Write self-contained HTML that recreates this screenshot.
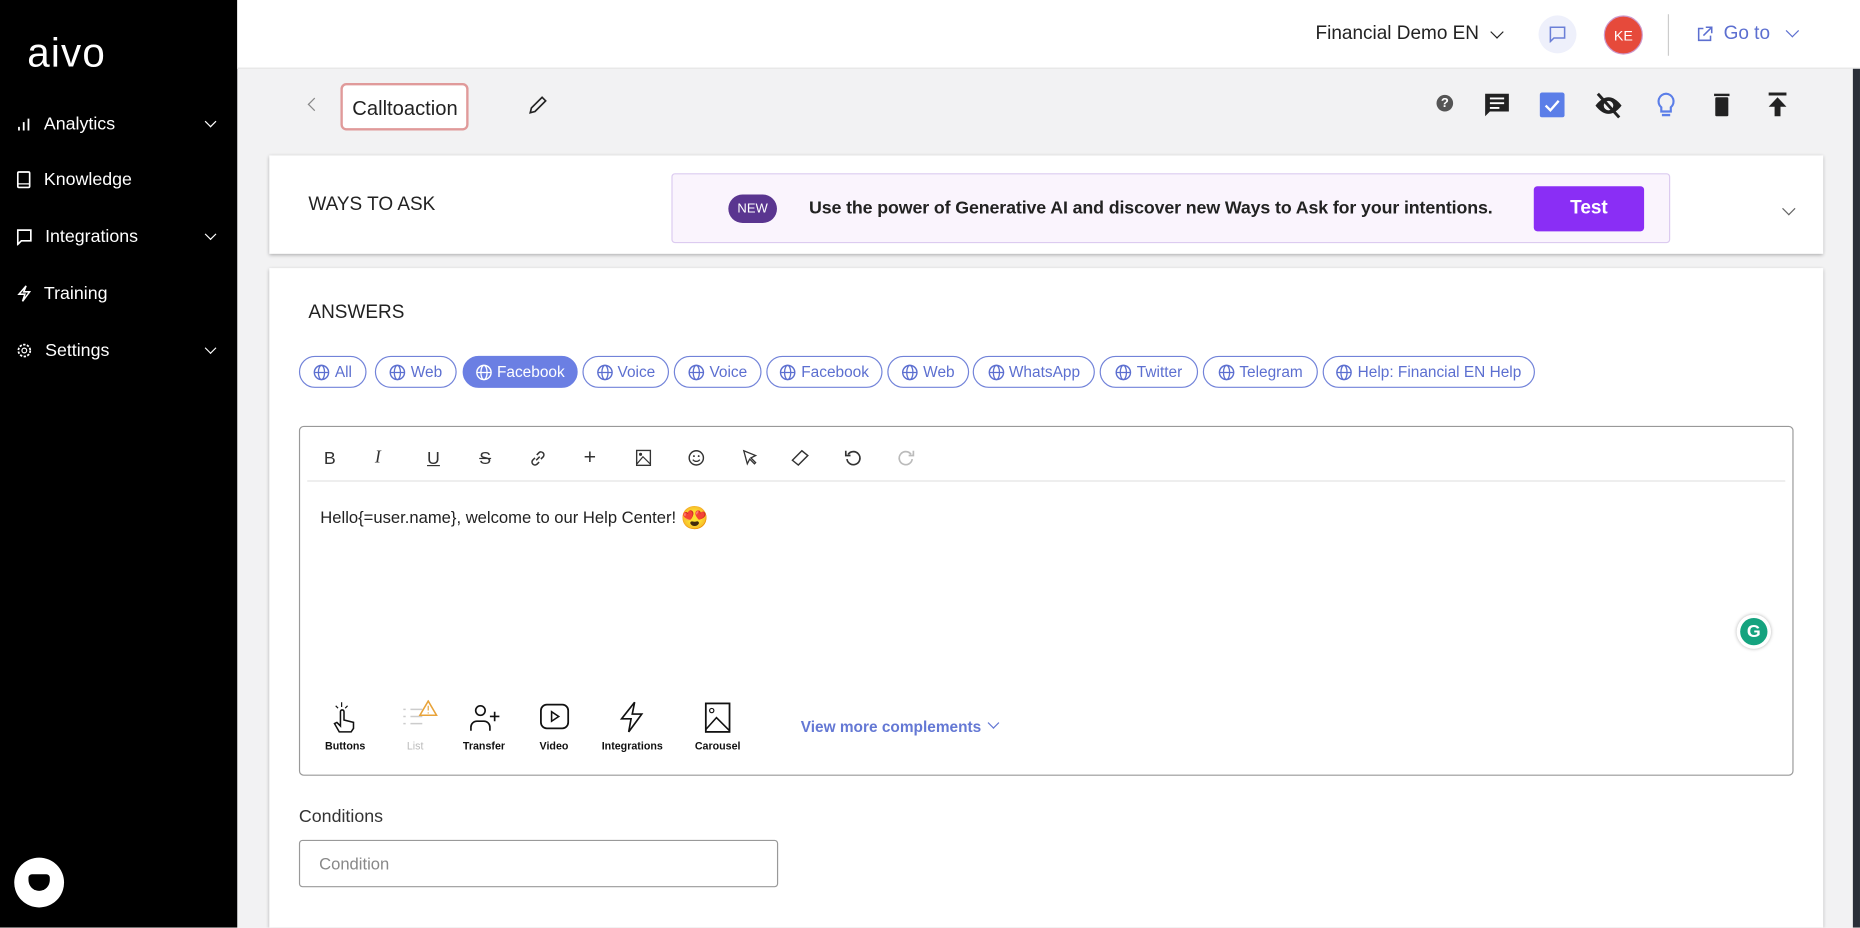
<!DOCTYPE html>
<html><head><meta charset="utf-8"><style>
*{box-sizing:border-box;margin:0;padding:0}
html,body{width:1860px;height:928px;overflow:hidden}
body{font-family:"Liberation Sans",sans-serif;background:#f2f2f3}
#w{width:1568px;height:782px;transform:scale(1.18622);transform-origin:0 0;position:absolute;left:0;top:0;background:#f2f2f3;overflow:hidden}
.a{position:absolute}
.sb{left:0;top:0;width:200px;height:782px;background:#000;color:#fff}
.mi{position:absolute;left:14px;font-size:15px;color:#fff;display:flex;align-items:center;gap:11px}
.chev{position:absolute;left:174px;width:7px;height:7px;border-right:1.5px solid #fff;border-bottom:1.5px solid #fff;transform:rotate(45deg)}
.top{left:200px;top:0;width:1368px;height:58px;background:#fff;border-bottom:1px solid #e4e4e4}
.card{background:#fff;box-shadow:0 1px 3px rgba(0,0,0,.3)}
.chip{position:absolute;top:300px;height:27px;border:1px solid #7283d9;border-radius:14px;color:#5c6fd0;font-size:13px;display:flex;align-items:center;justify-content:center;gap:4px}
.chip.on{background:#6b7fe3;color:#fff;border-color:#6b7fe3}
.tb{position:absolute;top:378px;font-size:15px;color:#333}
.cl{position:absolute;top:624px;font-size:9px;font-weight:bold;color:#111;transform:translateX(-50%)}
</style></head><body><div id="w">
<div class="a sb">
<div class="a" style="left:23px;top:26px;font-size:34px;letter-spacing:1px;font-weight:300">aivo</div>
<div class="mi" style="top:96px"><svg width="12" height="12"><path d="M2 11V8M6 11V4M10 11V1" stroke="#fff" stroke-width="1.5"/></svg>Analytics</div><div class="chev" style="top:99px"></div>
<div class="mi" style="top:143px"><svg width="12" height="15"><rect x="1" y="1" width="10" height="13" rx="1" fill="none" stroke="#fff" stroke-width="1.4"/><line x1="1" y1="11" x2="11" y2="11" stroke="#fff"/></svg>Knowledge</div>
<div class="mi" style="top:191px"><svg width="13" height="14"><path d="M1 1h11v9H4l-3 3z" fill="none" stroke="#fff" stroke-width="1.4"/></svg>Integrations</div><div class="chev" style="top:194px"></div>
<div class="mi" style="top:239px"><svg width="12" height="15"><path d="M8 1L2 8h5l-2 6 6-8H6z" fill="none" stroke="#fff" stroke-width="1.3"/></svg>Training</div>
<div class="mi" style="top:287px"><svg width="13" height="13"><circle cx="6.5" cy="6.5" r="5" fill="none" stroke="#fff" stroke-width="1.5" stroke-dasharray="2 1.2"/><circle cx="6.5" cy="6.5" r="2" fill="none" stroke="#fff"/></svg>Settings</div><div class="chev" style="top:290px"></div>
<div class="a" style="left:12px;top:723px;width:42px;height:42px;border-radius:50%;background:#fff"><div class="a" style="left:12px;top:14px;width:18px;height:14px;background:#000;border-radius:3px 3px 9px 9px"></div></div>
</div>
<div class="a top">
<div class="a" style="left:909px;top:20px;font-size:16px;color:#222">Financial Demo EN</div>
<div class="a" style="left:1058px;top:23px;width:8px;height:8px;border-right:1.5px solid #222;border-bottom:1.5px solid #222;transform:rotate(45deg)"></div>
<div class="a" style="left:1097px;top:13px;width:32px;height:32px;border-radius:50%;background:#eef0fb"><svg class="a" style="left:9px;top:9px" width="14" height="14"><path d="M1 1h12v9H4l-3 3z" fill="none" stroke="#6b7fd7" stroke-width="1.3"/></svg></div>
<div class="a" style="left:1152px;top:13px;width:33px;height:33px;border-radius:50%;background:#e64a3b;border:1.5px solid #c9c;color:#fff;font-size:12px;display:flex;align-items:center;justify-content:center">KE</div>
<div class="a" style="left:1206px;top:12px;width:1px;height:35px;background:#ccc"></div>
<svg class="a" style="left:1230px;top:22px" width="14" height="14"><path d="M6 2H2v10h10V8M8 1h5v5M13 1L6 8" fill="none" stroke="#5c6fd0" stroke-width="1.3"/></svg>
<div class="a" style="left:1253px;top:20px;font-size:16px;color:#5c6fd0">Go to</div>
<div class="a" style="left:1307px;top:22px;width:8px;height:8px;border-right:1.5px solid #5c6fd0;border-bottom:1.5px solid #5c6fd0;transform:rotate(45deg)"></div>
</div>
<div class="a" style="left:1562px;top:58px;width:6px;height:724px;background:#2a2f38"></div>
<div class="a" style="left:261px;top:84px;width:8px;height:8px;border-left:1.5px solid #888;border-bottom:1.5px solid #888;transform:rotate(45deg)"></div>
<div class="a" style="left:287px;top:70px;width:108px;height:40px;border:2px solid #e09a9a;border-radius:5px;background:#fff;font-size:17px;color:#222;padding:10px 0 0 8px">Calltoaction</div>
<svg class="a" style="left:445px;top:80px" width="17" height="17"><path d="M2 15l1-4 9-9 3 3-9 9z" fill="none" stroke="#222" stroke-width="1.4"/></svg>
<div class="a" style="left:1211px;top:80px;width:14px;height:14px;border-radius:50%;background:#555;color:#fff;font-size:11px;font-weight:bold;text-align:center;line-height:14px">?</div>
<svg class="a" style="left:1251px;top:78px" width="22" height="22"><path d="M1 1h20v15H5l-4 4z" fill="#222"/><path d="M5 5h12M5 9h12M5 13h8" stroke="#fff" stroke-width="1.6"/></svg>
<svg class="a" style="left:1298px;top:78px" width="21" height="21"><rect width="21" height="21" rx="2" fill="#5b7ee8"/><path d="M5 11l4 4 7-8" stroke="#fff" stroke-width="2" fill="none"/></svg>
<svg class="a" style="left:1344px;top:78px" width="24" height="22"><path d="M1 11q11-14 22 0q-11 14-22 0z" fill="#222"/><circle cx="12" cy="11" r="4" fill="#f2f2f3"/><line x1="3" y1="1" x2="21" y2="21" stroke="#222" stroke-width="2.5"/></svg>
<svg class="a" style="left:1396px;top:77px" width="17" height="24"><path d="M8.5 2a6.5 6.5 0 0 0-4 11.5V17h8v-3.5A6.5 6.5 0 0 0 8.5 2z" fill="none" stroke="#5b7ee8" stroke-width="1.8"/><path d="M5 20h7" stroke="#5b7ee8" stroke-width="2"/></svg>
<svg class="a" style="left:1444px;top:77px" width="15" height="22"><rect x="1" y="2" width="13" height="2" fill="#222"/><rect x="2" y="5" width="11" height="16" rx="1" fill="#222"/></svg>
<svg class="a" style="left:1490px;top:77px" width="17" height="22"><rect x="1" y="1" width="15" height="2.5" fill="#222"/><path d="M8.5 5L1 13h5v8h5v-8h5z" fill="#222"/></svg>
<div class="a card" style="left:227px;top:131px;width:1310px;height:83px">
<div class="a" style="left:33px;top:33px;font-size:16px;color:#222">WAYS TO ASK</div>
<div class="a" style="left:339px;top:15px;width:842px;height:59px;background:#faf4fd;border:1px solid #dccbf0;border-radius:3px">
<div class="a" style="left:47px;top:17px;width:41px;height:24px;border-radius:12px;background:#5a3590;color:#fff;font-size:11px;text-align:center;line-height:24px">NEW</div>
<div class="a" style="left:115px;top:20px;font-size:15px;font-weight:bold;color:#222;letter-spacing:-0.1px">Use the power of Generative AI and discover new Ways to Ask for your intentions.</div>
<div class="a" style="left:726px;top:10px;width:93px;height:38px;background:#8a2ef5;border-radius:3px;color:#fff;font-size:16px;font-weight:bold;text-align:center;line-height:38px">Test</div>
</div>
<div class="a" style="left:1277px;top:41px;width:8px;height:8px;border-right:1.3px solid #666;border-bottom:1.3px solid #666;transform:rotate(45deg)"></div>
</div>
<div class="a card" style="left:227px;top:226px;width:1310px;height:556px"></div>
<div class="a" style="left:260px;top:255px;font-size:16px;color:#222">ANSWERS</div>
<svg width="0" height="0" style="position:absolute"><defs><g id="gl"><circle cx="7" cy="7" r="6" fill="none" stroke="currentColor" stroke-width="1.2"/><ellipse cx="7" cy="7" rx="2.6" ry="6" fill="none" stroke="currentColor" stroke-width="1.1"/><path d="M1 7h12" stroke="currentColor" stroke-width="1.1"/></g></defs></svg>
<div class="chip" style="left:252px;width:57px"><svg width="14" height="14"><use href="#gl"/></svg>All</div>
<div class="chip" style="left:316px;width:69px"><svg width="14" height="14"><use href="#gl"/></svg>Web</div>
<div class="chip on" style="left:390px;width:97px"><svg width="14" height="14"><use href="#gl"/></svg>Facebook</div>
<div class="chip" style="left:491px;width:73px"><svg width="14" height="14"><use href="#gl"/></svg>Voice</div>
<div class="chip" style="left:568px;width:74px"><svg width="14" height="14"><use href="#gl"/></svg>Voice</div>
<div class="chip" style="left:646px;width:98px"><svg width="14" height="14"><use href="#gl"/></svg>Facebook</div>
<div class="chip" style="left:748px;width:69px"><svg width="14" height="14"><use href="#gl"/></svg>Web</div>
<div class="chip" style="left:820px;width:103px"><svg width="14" height="14"><use href="#gl"/></svg>WhatsApp</div>
<div class="chip" style="left:927px;width:83px"><svg width="14" height="14"><use href="#gl"/></svg>Twitter</div>
<div class="chip" style="left:1014px;width:97px"><svg width="14" height="14"><use href="#gl"/></svg>Telegram</div>
<div class="chip" style="left:1115px;width:179px"><svg width="14" height="14"><use href="#gl"/></svg>Help: Financial EN Help</div>
<div class="a" style="left:252px;top:359px;width:1260px;height:295px;border:1px solid #999;border-radius:4px;background:#fff"></div>
<div class="a" style="left:259px;top:405px;width:1246px;height:1px;background:#e2e2e2"></div>
<div class="tb" style="left:273px">B</div>
<div class="tb" style="left:316px;font-style:italic;font-family:'Liberation Serif',serif">I</div>
<div class="tb" style="left:360px;text-decoration:underline">U</div>
<div class="tb" style="left:404px;text-decoration:line-through">S</div>
<svg class="a" style="left:446px;top:379px" width="15" height="15"><path d="M6 9l3-3M5 7L3 9a2.5 2.5 0 0 0 3.5 3.5L8.5 10.5M10 8l2-2A2.5 2.5 0 0 0 8.5 2.5L6.5 4.5" fill="none" stroke="#333" stroke-width="1.3"/></svg>
<div class="tb" style="left:492px;font-size:18px;top:375px">+</div>
<svg class="a" style="left:536px;top:379px" width="13" height="14"><rect x=".7" y=".7" width="11.6" height="12.6" fill="none" stroke="#333" stroke-width="1.2"/><path d="M1 12l5-6 6 6" fill="none" stroke="#333"/><circle cx="4" cy="4" r="1.3" fill="#333"/></svg>
<svg class="a" style="left:580px;top:379px" width="14" height="14"><circle cx="7" cy="7" r="6" fill="none" stroke="#333" stroke-width="1.2"/><circle cx="5" cy="5.5" r=".8" fill="#333"/><circle cx="9" cy="5.5" r=".8" fill="#333"/><path d="M4 8.5q3 3 6 0" fill="none" stroke="#333"/></svg>
<svg class="a" style="left:625px;top:379px" width="14" height="14"><path d="M2 1l3 11 2-4 4 4 1-1-4-4 4-2z" fill="none" stroke="#333" stroke-width="1.1"/></svg>
<svg class="a" style="left:667px;top:379px" width="16" height="14"><path d="M1 9l8-8 5 4-8 8z" fill="none" stroke="#333" stroke-width="1.2"/></svg>
<svg class="a" style="left:712px;top:379px" width="14" height="14"><path d="M3 4A5.5 5.5 0 1 1 2 8" fill="none" stroke="#333" stroke-width="1.4"/><path d="M1 1v4h4" fill="none" stroke="#333" stroke-width="1.4"/></svg>
<svg class="a" style="left:757px;top:379px" width="14" height="14"><path d="M11 4A5.5 5.5 0 1 0 12 8" fill="none" stroke="#bbb" stroke-width="1.4"/><path d="M13 1v4H9" fill="none" stroke="#bbb" stroke-width="1.4"/></svg>
<div class="a" style="left:270px;top:425px;font-size:14px;color:#222">Hello{=user.name}, welcome to our Help Center! <span style="font-size:19px;vertical-align:-2px">😍</span></div>
<div class="a" style="left:1464px;top:518px;width:29px;height:29px;border-radius:50%;background:#fff;box-shadow:0 0 3px rgba(0,0,0,.3)"><div class="a" style="left:3px;top:3px;width:23px;height:23px;border-radius:50%;background:#15a37f;color:#fff;font-weight:bold;font-size:15px;text-align:center;line-height:23px">G</div></div>
<svg class="a" style="left:280px;top:591px" width="22" height="28"><path d="M6 26l-4-7 2-1 3 3V9a1.5 1.5 0 0 1 3 0v7l8 2v5l-2 3z" fill="none" stroke="#111" stroke-width="1.3"/><path d="M8 1v4M3 4l2 2M13 4l-2 2" stroke="#111"/></svg>
<svg class="a" style="left:338px;top:590px" width="32" height="24"><path d="M8 8h10M8 14h10M8 20h10M2 8h2M2 14h2M2 20h2" stroke="#ccc" stroke-width="1.3"/><path d="M23 1l7 12H16z" fill="#fff" stroke="#e8a33a" stroke-width="1.3"/><path d="M23 5v4M23 10.5v1" stroke="#e8a33a"/></svg>
<svg class="a" style="left:396px;top:593px" width="26" height="24"><circle cx="9" cy="6" r="4" fill="none" stroke="#111" stroke-width="1.4"/><path d="M1 23v-3a5 5 0 0 1 5-5h6a5 5 0 0 1 5 5v3" fill="none" stroke="#111" stroke-width="1.4"/><path d="M21 7v8M17 11h8" stroke="#111" stroke-width="1.4"/></svg>
<svg class="a" style="left:455px;top:593px" width="25" height="22"><rect x="1" y="1" width="23" height="20" rx="5" fill="none" stroke="#111" stroke-width="1.5"/><path d="M10 7v8l6-4z" fill="none" stroke="#111" stroke-width="1.3"/></svg>
<svg class="a" style="left:522px;top:591px" width="22" height="27"><path d="M13 1L2 15h8l-2 11 11-15h-8z" fill="none" stroke="#111" stroke-width="1.4"/></svg>
<svg class="a" style="left:594px;top:592px" width="22" height="26"><rect x="1" y="1" width="20" height="24" fill="none" stroke="#111" stroke-width="1.5"/><path d="M1 23l9-10 11 11" fill="none" stroke="#111" stroke-width="1.3"/><circle cx="6" cy="7" r="1.8" fill="none" stroke="#111"/></svg>
<div class="cl" style="left:291px">Buttons</div>
<div class="cl" style="left:350px;color:#bbb;font-weight:normal">List</div>
<div class="cl" style="left:408px">Transfer</div>
<div class="cl" style="left:467px">Video</div>
<div class="cl" style="left:533px">Integrations</div>
<div class="cl" style="left:605px">Carousel</div>
<div class="a" style="left:675px;top:605px;font-size:13px;font-weight:bold;color:#6478d4">View more complements</div>
<div class="a" style="left:834px;top:606px;width:7px;height:7px;border-right:1.5px solid #6478d4;border-bottom:1.5px solid #6478d4;transform:rotate(45deg)"></div>
<div class="a" style="left:252px;top:680px;font-size:15px;color:#333">Conditions</div>
<div class="a" style="left:252px;top:708px;width:404px;height:40px;border:1px solid #999;border-radius:3px;background:#fff;font-size:14px;color:#888;padding:11px 0 0 16px">Condition</div>
</div></body></html>
